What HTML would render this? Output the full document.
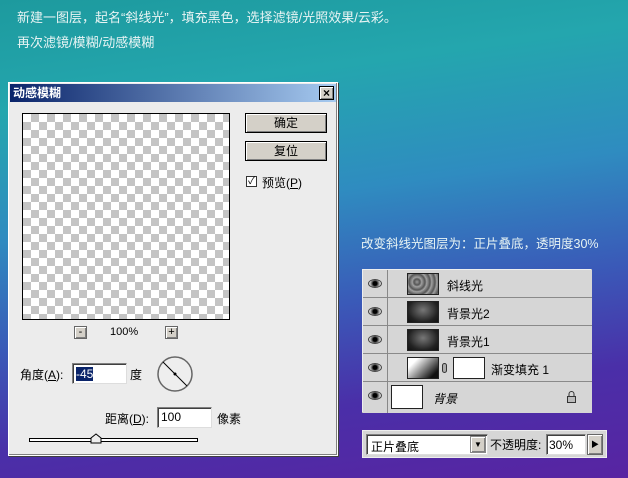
<!DOCTYPE html><html><head><meta charset="utf-8"><style>
*{margin:0;padding:0;box-sizing:border-box}
body{width:628px;height:478px;overflow:hidden;position:relative;font-family:"Liberation Sans","Noto Sans CJK SC",sans-serif;font-size:12px;
background:linear-gradient(172deg,#1d9a9e 0%,#24a6ae 20%,#2f8cc0 42%,#3a5ab8 62%,#4a2fa8 80%,#5824a2 100%);}
.a{position:absolute}
.t{color:#e8f4f4;font-size:13px}
.chk{background-color:#fff;background-image:linear-gradient(45deg,#c4c4c4 25%,transparent 25%,transparent 75%,#c4c4c4 75%),linear-gradient(45deg,#c4c4c4 25%,transparent 25%,transparent 75%,#c4c4c4 75%);background-size:16px 16px;background-position:0 0,8px 8px}
.btn{background:#d4d0c8;border:1px solid #000;box-shadow:inset 1px 1px #fff,inset -1px -1px #808080;text-align:center;line-height:18px;font-size:12px}
.inp{background:#fff;border:1px solid #808080;border-right-color:#ddd;border-bottom-color:#ddd;box-shadow:inset 1px 1px #404040}
.row{position:absolute;left:0;width:229px;height:28px;border-bottom:1px solid #8a8a8a;background:#d6d6d6}
.eye{position:absolute;left:5px;top:9px;width:14px;height:9px;border-radius:50%;background:radial-gradient(circle,#000 0 2px,#555 3px,#ccc 5px);border:1px solid #444}
.th{position:absolute;top:3px;width:32px;height:22px;border:1px solid #222}
.dk{background:radial-gradient(ellipse at 50% 40%,#777,#222 70%,#111)}
</style></head><body>
<div class="a t" style="left:17px;top:7px">新建一图层，起名“斜线光”，填充黑色，选择滤镜/光照效果/云彩。</div>
<div class="a t" style="left:17px;top:32px">再次滤镜/模糊/动感模糊</div>
<div class="a t" style="left:361px;top:233px;font-size:12.5px">改变斜线光图层为：正片叠底，透明度30%</div>

<div class="a" style="left:8px;top:82px;width:330px;height:374px;background:#ececec;border:1px solid #fff;box-shadow:1px 1px 0 #404040,inset -1px -1px #808080"></div>
<div class="a" style="left:10px;top:84px;width:326px;height:18px;background:linear-gradient(90deg,#0a246a,#a6caf0);color:#fff;font-weight:bold;font-size:12px;line-height:18px;padding-left:3px">动感模糊</div>
<div class="a btn" style="left:319px;top:86px;width:15px;height:14px;line-height:12px;font-size:12px;font-weight:bold">×</div>
<div class="a chk" style="left:22px;top:113px;width:208px;height:207px;border:1px solid #000"></div>
<div class="a btn" style="left:245px;top:113px;width:82px;height:20px">确定</div>
<div class="a btn" style="left:245px;top:141px;width:82px;height:20px">复位</div>
<div class="a" style="left:246px;top:176px;width:11px;height:11px;border:1px solid #333;background:#fff;font-size:10px;line-height:9px;text-align:center">✓</div>
<div class="a" style="left:262px;top:174px">预览(<u>P</u>)</div>
<div class="a btn" style="left:74px;top:326px;width:13px;height:13px;line-height:10px;border-color:#666;font-size:11px">-</div>
<div class="a" style="left:110px;top:326px;font-size:11px">100%</div>
<div class="a btn" style="left:165px;top:326px;width:13px;height:13px;line-height:11px;border-color:#666;font-size:11px">+</div>
<div class="a" style="left:20px;top:366px">角度(<u>A</u>):</div>
<div class="a inp" style="left:72px;top:363px;width:55px;height:21px"><span style="background:#0a246a;color:#fff;position:absolute;left:3px;top:3px;font-size:12px;line-height:14px">-45</span></div>
<div class="a" style="left:130px;top:366px">度</div>
<svg class="a" style="left:156px;top:355px" width="38" height="38"><circle cx="19" cy="19" r="17" fill="#eee" stroke="#666" stroke-width="1.5"/><line x1="7" y1="7" x2="31" y2="31" stroke="#000"/><circle cx="19" cy="19" r="1.5"/></svg>
<div class="a" style="left:105px;top:410px">距离(<u>D</u>):</div>
<div class="a inp" style="left:157px;top:407px;width:55px;height:21px;padding:2px 3px;font-size:12px">100</div>
<div class="a" style="left:217px;top:410px">像素</div>
<div class="a" style="left:29px;top:438px;width:169px;height:4px;border:1px solid #000;background:#fff"></div>
<svg class="a" style="left:90px;top:433px" width="12" height="11"><path d="M1 10V5L6 1L11 5V10Z" fill="#eee" stroke="#000"/></svg>

<div class="a" style="left:362px;top:269px;width:230px;height:144px;background:#d6d6d6;border:1px solid #eee;border-right-color:#888;border-bottom-color:#888">
<div class="row" style="top:0"><div class="eye"></div><div class="th" style="left:44px;background:repeating-radial-gradient(circle at 30% 40%,#999 0,#555 3px,#aaa 5px)"></div><div class="a" style="left:84px;top:7px">斜线光</div></div>
<div class="row" style="top:28px"><div class="eye"></div><div class="th dk" style="left:44px"></div><div class="a" style="left:84px;top:7px">背景光2</div></div>
<div class="row" style="top:56px"><div class="eye"></div><div class="th dk" style="left:44px"></div><div class="a" style="left:84px;top:7px">背景光1</div></div>
<div class="row" style="top:84px"><div class="eye"></div><div class="th" style="left:44px;background:linear-gradient(135deg,#fff 20%,#111 85%)"></div><div class="a" style="left:79px;top:9px;width:5px;height:10px;border:1px solid #333;border-radius:3px;background:#aaa"></div><div class="th" style="left:90px;background:#fff"></div><div class="a" style="left:128px;top:7px">渐变填充 1</div></div>
<div class="row" style="top:112px;height:31px;border:none"><div class="eye"></div><div class="th" style="left:28px;width:32px;height:24px;background:#fff"></div><div class="a" style="left:70px;top:8px;font-style:italic">背景</div>
<svg class="a" style="left:203px;top:8px" width="11" height="13"><path d="M3 6V4A2.5 2.5 0 0 1 8 4V6" fill="none" stroke="#333"/><rect x="1.5" y="6.5" width="8" height="6" fill="#bbb" stroke="#333"/></svg></div>
<div class="a" style="left:24px;top:0;width:1px;height:143px;background:#888"></div>
</div>

<div class="a" style="left:362px;top:430px;width:245px;height:28px;background:#d6d6d6;border:1px solid #eee">
<div class="a inp" style="left:3px;top:3px;width:122px;height:21px;padding:3px 4px">正片叠底</div>
<div class="a btn" style="left:107px;top:5px;width:16px;height:17px;font-size:8px;line-height:15px;border-color:#888">▼</div>
<div class="a" style="left:127px;top:5px">不透明度:</div>
<div class="a inp" style="left:183px;top:3px;width:40px;height:21px;padding:3px 2px">30%</div>
<div class="a btn" style="left:224px;top:3px;width:16px;height:21px;font-size:8px;line-height:19px;border-color:#666">▶</div>
</div>
</body></html>
